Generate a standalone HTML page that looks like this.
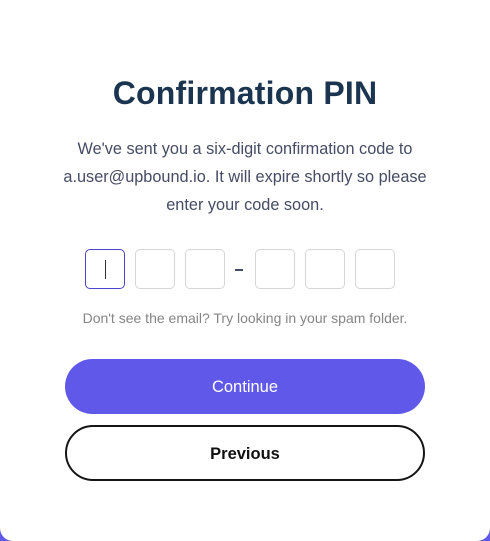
<!DOCTYPE html>
<html><head><meta charset="utf-8"><style>
html,body{margin:0;padding:0;width:490px;height:541px;overflow:hidden;background:#5f58e8;}
.card{position:absolute;left:0;top:0;width:490px;height:541px;background:#fff;border-radius:0 0 13px 13px;font-family:"Liberation Sans",sans-serif;}
h1{position:absolute;left:0;right:0;top:75px;margin:0;text-align:center;font-size:32px;font-weight:bold;color:#1b3550;letter-spacing:0.2px;}
.p{position:absolute;left:55px;right:55px;top:135px;text-align:center;font-size:16.3px;line-height:28px;color:#454c63;}
.box{position:absolute;top:249px;width:38px;height:38px;border:1px solid #d6d6d6;border-radius:5px;box-sizing:content-box;}
.box.a{border-color:#4b45c9;}
.cur{position:absolute;left:19px;top:10px;width:1px;height:19px;background:#333;}
.dash{position:absolute;left:235px;top:269px;width:8px;height:2px;background:#454c63;}
.spam{position:absolute;left:0;right:0;top:310px;text-align:center;font-size:14px;color:#858585;}
.btn{position:absolute;left:65px;width:360px;height:55px;border-radius:28px;box-sizing:border-box;text-align:center;font-size:16.5px;}
.c{top:359px;background:#5f58e8;color:#fff;line-height:57px;}
.pr{top:425px;height:56px;border:2px solid #151515;color:#111;font-weight:bold;line-height:54px;}
</style></head><body><div class="card">
<h1>Confirmation PIN</h1>
<div class="p">We've sent you a six-digit confirmation code to a.user@upbound.io. It will expire shortly so please enter your code soon.</div>
<div class="box a" style="left:85px"><div class="cur"></div></div>
<div class="box" style="left:135px"></div>
<div class="box" style="left:185px"></div>
<div class="dash"></div>
<div class="box" style="left:255px"></div>
<div class="box" style="left:305px"></div>
<div class="box" style="left:355px"></div>
<div class="spam">Don't see the email? Try looking in your spam folder.</div>
<div class="btn c">Continue</div>
<div class="btn pr">Previous</div>
</div></body></html>
